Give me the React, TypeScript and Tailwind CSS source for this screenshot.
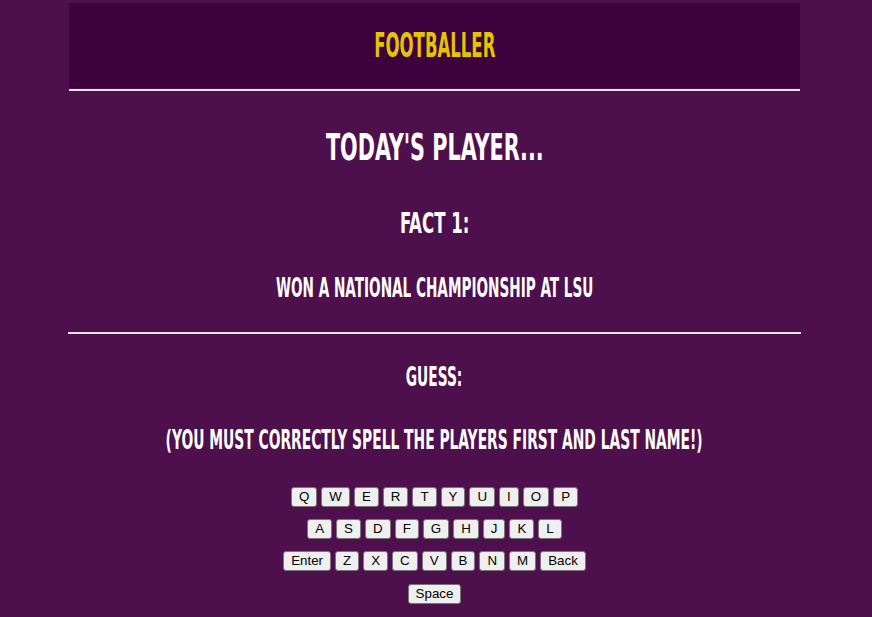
import React from "react";

const row1 = ["Q", "W", "E", "R", "T", "Y", "U", "I", "O", "P"];
const row2 = ["A", "S", "D", "F", "G", "H", "J", "K", "L"];
const row3 = ["Enter", "Z", "X", "C", "V", "B", "N", "M", "Back"];

function Key({ label }: { label: string }) {
  return (
    <button className="h-[20px] px-[7px] bg-[#efefef] border border-[#767676] rounded-[3px] text-black text-[13.33px] leading-none font-['Liberation_Sans',Arial,sans-serif]">
      {label}
    </button>
  );
}

function Title({ children, className }: { children: React.ReactNode; className: string }) {
  return (
    <div className="flex justify-center leading-none whitespace-nowrap">
      <span className={"shrink-0 inline-block font-bold font-['DejaVu_Sans_Condensed','DejaVu_Sans',sans-serif] font-stretch-condensed " + className}>
        {children}
      </span>
    </div>
  );
}

export default function App() {
  return (
    <div className="min-h-screen w-full bg-[#4e104c] pl-[68px] pr-[71px] pt-[3px] pb-[12px]">
      <div className="mx-px h-[85px] bg-[#3d013d] pt-[26px]">
        <Title className="text-[33px] text-[#e5c500] scale-x-[0.557]">FOOTBALLER</Title>
      </div>
      <div className="mx-px mt-px h-[2px] bg-[#e4e4e4]" />
      <div className="mt-[38px]">
        <Title className="text-[37px] text-white scale-x-[0.623]">TODAY'S PLAYER...</Title>
      </div>
      <div className="mt-[43px]">
        <Title className="text-[29px] text-white scale-x-[0.636]">FACT 1:</Title>
      </div>
      <div className="mt-[37px]">
        <Title className="text-[26px] text-white scale-x-[0.582]">WON A NATIONAL CHAMPIONSHIP AT LSU</Title>
      </div>
      <div className="mt-[31px] h-[2px] bg-[#e4e4e4]" />
      <div className="mt-[30px]">
        <Title className="text-[26px] text-white scale-x-[0.59]">GUESS:</Title>
      </div>
      <div className="mt-[36px]">
        <Title className="text-[27px] text-white scale-x-[0.57]">(YOU MUST CORRECTLY SPELL THE PLAYERS FIRST AND LAST NAME!)</Title>
      </div>
      <div className="mt-[34px] flex flex-col items-center gap-3">
        <div className="flex justify-center gap-1">
          {row1.map((k) => (
            <Key key={k} label={k} />
          ))}
        </div>
        <div className="flex justify-center gap-1">
          {row2.map((k) => (
            <Key key={k} label={k} />
          ))}
        </div>
        <div className="flex justify-center gap-1">
          {row3.map((k) => (
            <Key key={k} label={k} />
          ))}
        </div>
        <div className="flex justify-center gap-1 mt-px">
          <Key label="Space" />
        </div>
      </div>
    </div>
  );
}
